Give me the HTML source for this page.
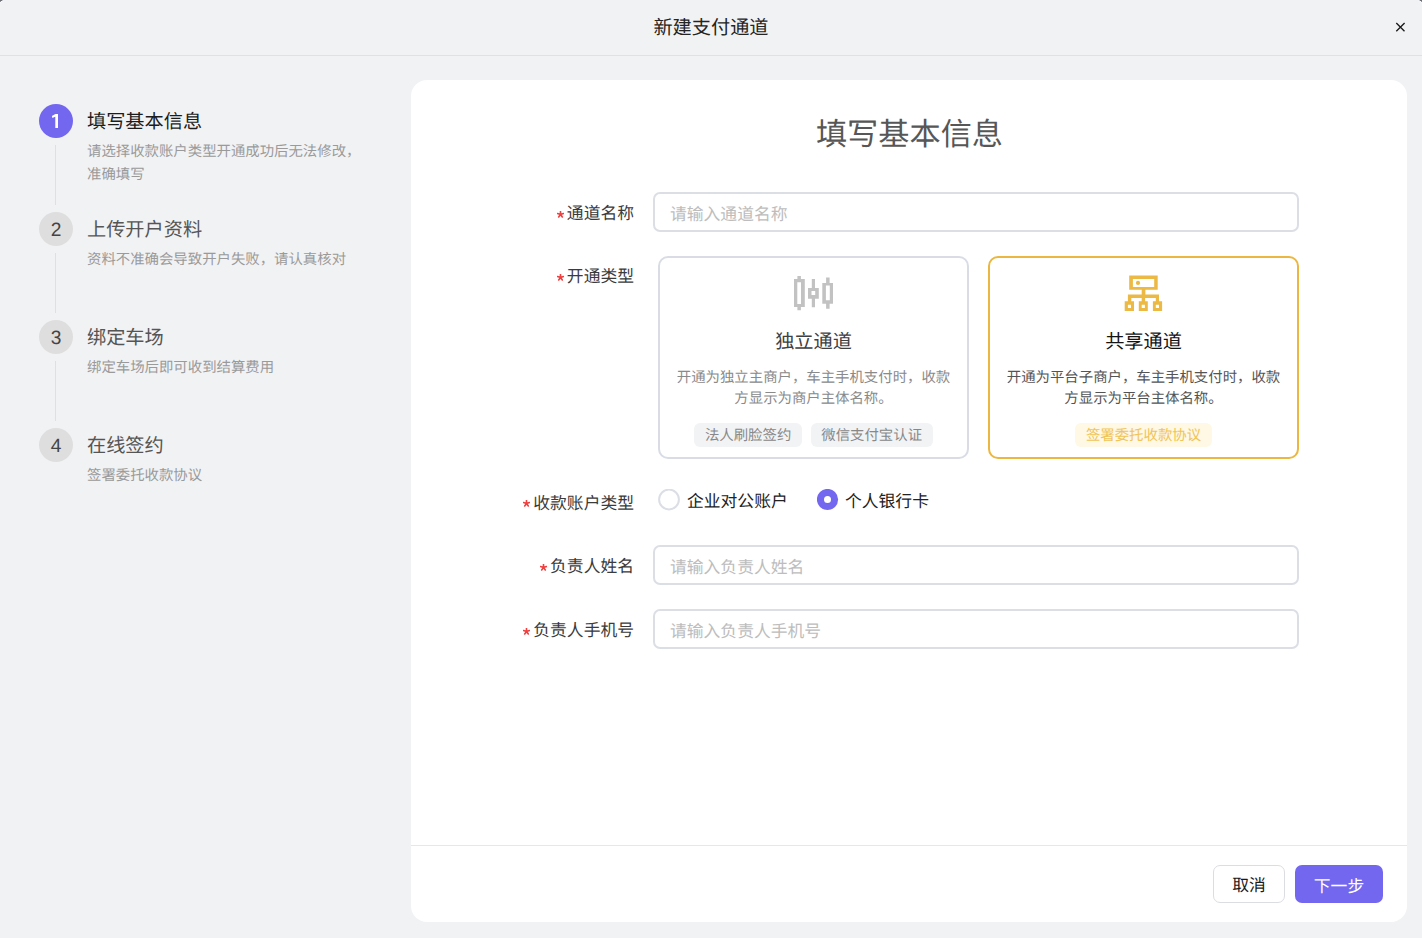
<!DOCTYPE html>
<html lang="zh-CN">
<head>
<meta charset="utf-8">
<style>
*{box-sizing:border-box;margin:0;padding:0}
html,body{width:1422px;height:938px;overflow:hidden}
body{text-rendering:geometricPrecision;background:#f1f2f4;font-family:"Liberation Sans",sans-serif;position:relative;color:#333}
.abs{position:absolute;white-space:nowrap}
.hdr{position:absolute;left:0;top:0;width:1422px;height:56px;border-bottom:1px solid #dfe0e8}
.title{left:0;width:1422px;top:16px;text-align:center;font-size:19.2px;line-height:26px;color:#242424}
.step-c{position:absolute;left:39px;width:34px;height:34px;border-radius:50%;background:#dedede;color:#444;font-size:19.2px;line-height:38px;text-align:center}
.step-c.on{background:#7367f0;color:#fff}
.step-t{position:absolute;left:87px;font-size:19.2px;line-height:26px;color:#555;white-space:nowrap}
.step-t.on{color:#1c1c1c}
.step-d{position:absolute;left:87px;font-size:14.4px;line-height:22.5px;color:#9a9a9a;white-space:nowrap}
.vline{position:absolute;left:55px;width:1px;background:#e0e0e4}
.card{position:absolute;left:411px;top:80px;width:996px;height:842px;background:#fff;border-radius:16px}
.h1{position:absolute;left:411.5px;width:996px;top:113.5px;text-align:center;font-size:31.2px;line-height:42px;color:#575757}
.lbl{position:absolute;right:788px;font-size:16.8px;line-height:27px;color:#3b3b3b;white-space:nowrap}
.lbl .ast{display:inline-block;vertical-align:baseline;margin-right:3px;position:relative;top:-1.5px}
.inp{position:absolute;left:653px;width:646px;height:40px;border:2px solid #dcdee6;border-radius:7px;font-size:16.8px;line-height:41px;padding-left:15px;color:#bdbdbd;white-space:nowrap}
.tc{position:absolute;top:256px;width:311px;height:203px;border:2px solid #d9dce4;border-radius:10px}
.tc.gold{border-color:#ebb741}
.tc-t{position:absolute;left:0;width:100%;top:72px;text-align:center;font-size:19.2px;line-height:26px;color:#404040}
.tc-d{position:absolute;left:16px;right:16px;top:109.5px;text-align:center;font-size:14.4px;line-height:21.6px;color:#8a8a8a}
.tags{position:absolute;left:0;width:100%;top:165px;text-align:center;font-size:0}
.tag{display:inline-block;height:24px;line-height:27px;padding:0 10.5px;border-radius:6px;background:#f2f3f5;color:#888;font-size:14.4px;margin:0 4.5px}
.radio{position:absolute;top:489px;width:21px;height:21px;border-radius:50%;border:2px solid #dcdee6}
.radio.on{background:#7367f0;border-color:#7367f0}
.radio.on::after{content:"";position:absolute;left:6.5px;top:6.5px;width:4px;height:4px;border-radius:50%;background:#fff}
.rtxt{position:absolute;font-size:16.8px;line-height:28px;color:#222;white-space:nowrap}
.divider{position:absolute;left:411px;top:845px;width:996px;height:1px;background:#e6e6ec}
.btn{position:absolute;top:865px;height:38px;border-radius:7px;font-size:16.8px;line-height:40px;text-align:center}
</style>
</head>
<body>
<div class="hdr"></div>
<div class="abs title">新建支付通道</div>
<svg class="abs" style="left:1394px;top:21px" width="12" height="12" viewBox="0 0 12 12"><path d="M2.3 2.1L10.5 10.2M10.6 2.1L2.3 10.2" stroke="#1a1a1a" stroke-width="1.35" fill="none"/></svg>

<!-- steps -->
<div class="step-c on" style="top:104px"></div>
<svg class="abs" style="left:46px;top:108px" width="20" height="26" viewBox="46 108 20 26"><path fill="#fff" d="M55.3 114H58V127.9H55.3Z M51.9 116.1L55.4 113.9L56.2 114.2V116.3L52.4 118.1Z"/></svg>
<div class="step-t on" style="top:110px">填写基本信息</div>
<div class="step-d" style="top:141px">请选择收款账户类型开通成功后无法修改，<br>准确填写</div>
<div class="vline" style="top:145px;height:60px"></div>

<div class="step-c" style="top:212px">2</div>
<div class="step-t" style="top:218px">上传开户资料</div>
<div class="step-d" style="top:249px">资料不准确会导致开户失败，请认真核对</div>
<div class="vline" style="top:253px;height:60px"></div>

<div class="step-c" style="top:320px">3</div>
<div class="step-t" style="top:326px">绑定车场</div>
<div class="step-d" style="top:357px">绑定车场后即可收到结算费用</div>
<div class="vline" style="top:361px;height:60px"></div>

<div class="step-c" style="top:428px">4</div>
<div class="step-t" style="top:434px">在线签约</div>
<div class="step-d" style="top:465px">签署委托收款协议</div>

<!-- card -->
<div class="card"></div>
<div class="h1">填写基本信息</div>

<div class="lbl" style="top:200px"><svg class="ast" width="7" height="7" viewBox="0 0 7 7"><path d="M3.5 3.5L3.50 0.40M3.5 3.5L6.45 2.54M3.5 3.5L5.32 6.01M3.5 3.5L1.68 6.01M3.5 3.5L0.55 2.54" stroke="#ef4040" stroke-width="1.6" stroke-linecap="round"/></svg>通道名称</div>
<div class="inp" style="top:192px">请输入通道名称</div>

<div class="lbl" style="top:263px"><svg class="ast" width="7" height="7" viewBox="0 0 7 7"><path d="M3.5 3.5L3.50 0.40M3.5 3.5L6.45 2.54M3.5 3.5L5.32 6.01M3.5 3.5L1.68 6.01M3.5 3.5L0.55 2.54" stroke="#ef4040" stroke-width="1.6" stroke-linecap="round"/></svg>开通类型</div>
<div class="tc" style="left:658px">
  <div class="tc-t">独立通道</div>
  <div class="tc-d">开通为独立主商户，车主手机支付时，收款方显示为商户主体名称。</div>
  <div class="tags"><span class="tag">法人刷脸签约</span><span class="tag">微信支付宝认证</span></div>
</div>
<div class="tc gold" style="left:988px">
  <div class="tc-t" style="color:#141414">共享通道</div>
  <div class="tc-d" style="color:#545454">开通为平台子商户，车主手机支付时，收款方显示为平台主体名称。</div>
  <div class="tags"><span class="tag" style="background:#fef8e5;color:#f0c457">签署委托收款协议</span></div>
</div>

<div class="lbl" style="top:489.5px"><svg class="ast" width="7" height="7" viewBox="0 0 7 7"><path d="M3.5 3.5L3.50 0.40M3.5 3.5L6.45 2.54M3.5 3.5L5.32 6.01M3.5 3.5L1.68 6.01M3.5 3.5L0.55 2.54" stroke="#ef4040" stroke-width="1.6" stroke-linecap="round"/></svg>收款账户类型</div>
<svg class="abs" style="left:658px;top:489px" width="22" height="22" viewBox="0 0 22 22"><circle cx="11" cy="10.5" r="9.9" fill="#fff" stroke="#dcdee6" stroke-width="2"/></svg>
<div class="rtxt" style="left:687px;top:488px">企业对公账户</div>
<svg class="abs" style="left:817px;top:489px" width="22" height="22" viewBox="0 0 22 22"><circle cx="10.5" cy="10.5" r="10.6" fill="#7367f0"/><circle cx="10.5" cy="10.5" r="3.5" fill="#fff"/></svg>
<div class="rtxt" style="left:845px;top:488px">个人银行卡</div>

<div class="lbl" style="top:553px"><svg class="ast" width="7" height="7" viewBox="0 0 7 7"><path d="M3.5 3.5L3.50 0.40M3.5 3.5L6.45 2.54M3.5 3.5L5.32 6.01M3.5 3.5L1.68 6.01M3.5 3.5L0.55 2.54" stroke="#ef4040" stroke-width="1.6" stroke-linecap="round"/></svg>负责人姓名</div>
<div class="inp" style="top:545px">请输入负责人姓名</div>
<div class="lbl" style="top:617px"><svg class="ast" width="7" height="7" viewBox="0 0 7 7"><path d="M3.5 3.5L3.50 0.40M3.5 3.5L6.45 2.54M3.5 3.5L5.32 6.01M3.5 3.5L1.68 6.01M3.5 3.5L0.55 2.54" stroke="#ef4040" stroke-width="1.6" stroke-linecap="round"/></svg>负责人手机号</div>
<div class="inp" style="top:609px">请输入负责人手机号</div>

<svg class="abs" style="left:790px;top:272px" width="48" height="42" viewBox="0 0 48 42"><path fill="#c2c2c2" fill-rule="evenodd" d="M4 7H14.8V35H4ZM7.3 10.2H11V32.1H7.3ZM7.4 4H10.9V7H7.4ZM7.4 35H10.9V38.3H7.4ZM18 16.1H28.8V26.7H18ZM21.5 19.1H25.2V23H21.5ZM21.8 7.1H25V16.1H21.8ZM21.8 26.7H25V35.2H21.8ZM32.3 10.9H43V31.8H32.3ZM35.9 13.6H39.8V28.2H35.9ZM36.1 5.4H39.6V10.9H36.1ZM36.1 31.8H39.6V36.75H36.1Z"/></svg>
<svg class="abs" style="left:1120px;top:270px" width="48" height="44" viewBox="0 0 48 44"><path fill="#ebb944" fill-rule="evenodd" d="M9.2 5.5H37.7V19.8H9.2ZM12.9 8.9H34.2V16.9H12.9ZM21.7 19.8H25.4V24.4H21.7ZM7.9 24.4H39V28.1H7.9ZM7.9 28.1H11.3V31.3H7.9ZM21.7 28.1H25.1V31.3H21.7ZM35.8 28.1H39V31.3H35.8ZM4.7 31.3H14V40.9H4.7ZM7.9 34.8H11V38H7.9ZM18.8 31.3H27.8V40.9H18.8ZM21.7 34.8H24.9V38H21.7ZM32.9 31.3H42.1V40.9H32.9ZM35.8 34.8H39V38H35.8Z"/><circle cx="18" cy="12.9" r="2.1" fill="#ebb944"/></svg>
<div class="divider"></div>
<div class="btn" style="left:1213px;width:72px;border:1px solid #dcdde3;color:#1a1a1a;background:#fff">取消</div>
<div class="btn" style="left:1295px;width:88px;background:#7367f0;color:#fff;line-height:44px">下一步</div>
<svg class="abs" style="left:0;top:0" width="4" height="3"><rect x="0" y="0" width="1" height="1" fill="#6b6f74"/><rect x="1" y="0" width="1" height="1" fill="#6e7277"/><rect x="2" y="0" width="1" height="1" fill="#c9cbce"/><rect x="0" y="1" width="1" height="1" fill="#8e9195"/><rect x="1" y="1" width="1" height="1" fill="#fafbfc"/><rect x="0" y="2" width="1" height="1" fill="#f7f8fa"/></svg>
<svg class="abs" style="left:1418px;top:0" width="4" height="3"><rect x="3" y="0" width="1" height="1" fill="#6b6f74"/><rect x="2" y="0" width="1" height="1" fill="#6e7277"/><rect x="1" y="0" width="1" height="1" fill="#c9cbce"/><rect x="3" y="1" width="1" height="1" fill="#8e9195"/><rect x="2" y="1" width="1" height="1" fill="#fafbfc"/><rect x="3" y="2" width="1" height="1" fill="#f7f8fa"/></svg>
</body>
</html>
